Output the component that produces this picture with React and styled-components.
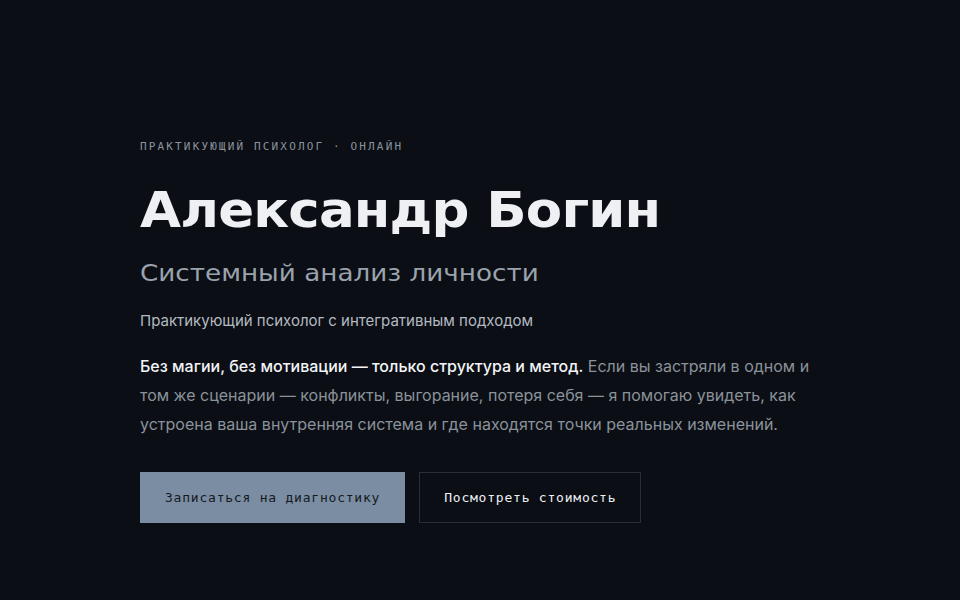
import React from 'react'
import styled, { createGlobalStyle } from 'styled-components'

const GlobalStyle = createGlobalStyle`
  html, body {
    margin: 0;
    padding: 0;
    background: #0b0e14;
  }
  body {
    font-family: Inter, "Noto Sans", sans-serif;
  }
`

const Hero = styled.section`
  min-height: 600px;
  box-sizing: border-box;
  padding: 139px 140px 0;
  background: #0b0e14;
`

const Eyebrow = styled.div`
  font-family: "DejaVu Sans Mono", "Liberation Mono", monospace;
  font-size: 11px;
  letter-spacing: 2.15px;
  color: #8a939d;
  text-transform: uppercase;
  line-height: 16px;
`

const Title = styled.h1`
  margin: 27px 0 0;
  font-family: "DejaVu Sans", sans-serif;
  font-weight: 700;
  font-size: 50px;
  line-height: 56px;
  color: #eef0f4;
  letter-spacing: -0.8px;
  transform: scaleX(1.06);
  transform-origin: left center;
  width: max-content;
`

const Subtitle = styled.h2`
  margin: 20px 0 0;
  font-family: "DejaVu Sans", sans-serif;
  font-weight: 400;
  font-size: 23px;
  line-height: 30px;
  color: #9aa3ad;
  transform: scaleX(1.14);
  transform-origin: left center;
  width: max-content;
`

const Tagline = styled.p`
  margin: 22px 0 0;
  font-size: 15px;
  line-height: 22px;
  color: #b3bac2;
`

const Lead = styled.p`
  margin: 20px 0 0;
  max-width: 680px;
  font-size: 16px;
  line-height: 29px;
  color: #8a929b;
`

const Strong = styled.strong`
  font-weight: 500;
  color: #f2f4f7;
`

const Actions = styled.div`
  display: flex;
  gap: 14px;
  margin-top: 33px;
`

const Button = styled.button`
  height: 51px;
  padding: 0 24px;
  font-family: "DejaVu Sans Mono", "Liberation Mono", monospace;
  font-size: 13px;
  letter-spacing: 0.78px;
  cursor: pointer;
  border: 1px solid ${p => (p.$primary ? '#7b8da2' : '#2a2f37')};
  background: ${p => (p.$primary ? '#7b8da2' : 'transparent')};
  color: ${p => (p.$primary ? '#141a22' : '#eef0f4')};
`

export default function App() {
  return (
    <>
      <GlobalStyle />
      <Hero>
        <Eyebrow>Практикующий психолог · онлайн</Eyebrow>
        <Title>Александр Богин</Title>
        <Subtitle>Системный анализ личности</Subtitle>
        <Tagline>Практикующий психолог с интегративным подходом</Tagline>
        <Lead>
          <Strong>Без магии, без мотивации — только структура и метод.</Strong>{' '}
          Если вы застряли в одном и том же сценарии — конфликты, выгорание, потеря себя — я помогаю
          увидеть, как устроена ваша внутренняя система и где находятся точки реальных изменений.
        </Lead>
        <Actions>
          <Button $primary>Записаться на диагностику</Button>
          <Button>Посмотреть стоимость</Button>
        </Actions>
      </Hero>
    </>
  )
}
